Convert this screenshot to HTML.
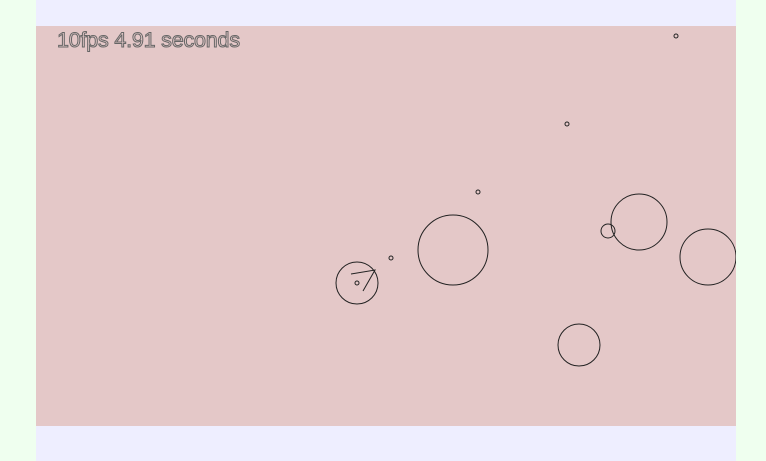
<!DOCTYPE html>
<html><head><style>
html,body{margin:0;padding:0;width:766px;height:461px;background:#efffef;overflow:hidden}
#col{position:absolute;left:36px;top:0;width:700px;height:461px;background:#eeeeff}
svg{position:absolute;left:36px;top:26px}
.t{position:absolute;left:57px;top:28px;font:21.5px "Liberation Sans",sans-serif;color:#e4c8c8;-webkit-text-stroke:1px #666;letter-spacing:-0.2px;white-space:nowrap}
</style></head><body>
<div id="col"></div>
<svg width="700" height="400" viewBox="36 26 700 400">
<rect x="36" y="26" width="700" height="400" fill="#e4c8c8"/>
<g fill="none" stroke="#222" stroke-width="1">
<circle cx="357" cy="283" r="21"/>
<circle cx="357" cy="283" r="2"/>
<polyline points="351,274 375,270 363,291"/>
<circle cx="453" cy="250" r="35"/>
<circle cx="639" cy="222" r="28"/>
<circle cx="608" cy="231" r="7"/>
<circle cx="708" cy="257" r="28"/>
<circle cx="579" cy="345" r="21"/>
<circle cx="676" cy="36" r="2"/>
<circle cx="567" cy="124" r="2"/>
<circle cx="478" cy="192" r="2"/>
<circle cx="391" cy="258" r="2"/>
</g>
</svg>
<div class="t">10fps 4.91 seconds</div>
</body></html>
